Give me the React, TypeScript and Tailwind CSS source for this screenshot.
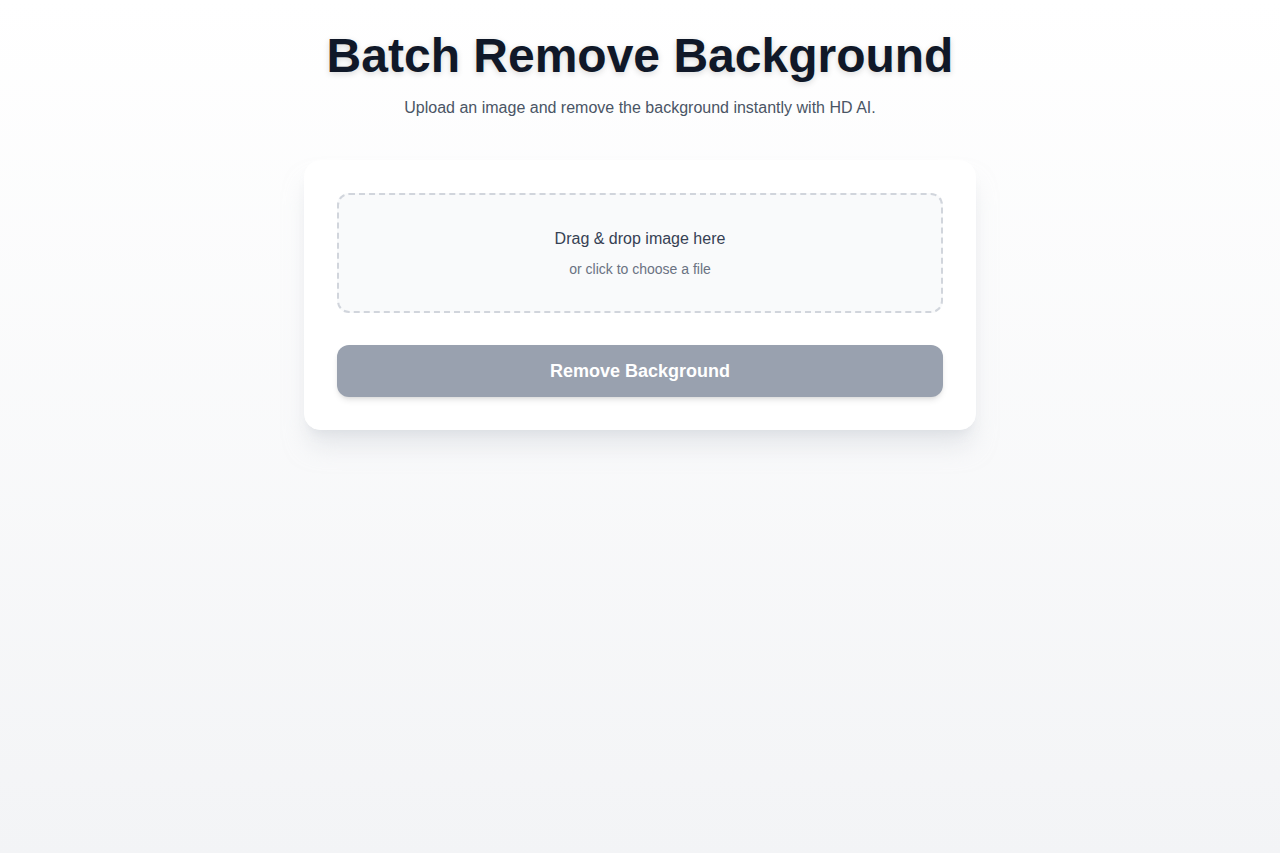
export default function App() {
  return (
    <div className="min-h-screen bg-gradient-to-b from-white to-gray-100 px-4 pt-8 pb-16 font-['Liberation_Sans',Arial,sans-serif]">
      <div className="mx-auto max-w-2xl">
        <h1 className="text-center text-5xl leading-[48px] font-bold text-gray-900 [text-shadow:0_2px_6px_rgba(0,0,0,0.15)]">
          Batch Remove Background
        </h1>
        <p className="mt-4 text-center text-base text-gray-600">
          Upload an image and remove the background instantly with HD AI.
        </p>

        <div className="mt-10 rounded-2xl border border-white bg-white p-8 shadow-xl shadow-gray-300/50">
          <label className="block cursor-pointer rounded-xl border-2 border-dashed border-gray-300 bg-gray-50 px-6 py-8 text-center">
            <input type="file" accept="image/*" className="hidden" />
            <p className="text-base text-gray-700">Drag &amp; drop image here</p>
            <p className="mt-2 text-sm text-gray-500">or click to choose a file</p>
          </label>

          <button
            disabled
            className="mt-8 w-full rounded-xl bg-gray-400 py-3 text-lg font-bold text-white shadow-md"
          >
            Remove Background
          </button>
        </div>
      </div>
    </div>
  )
}
